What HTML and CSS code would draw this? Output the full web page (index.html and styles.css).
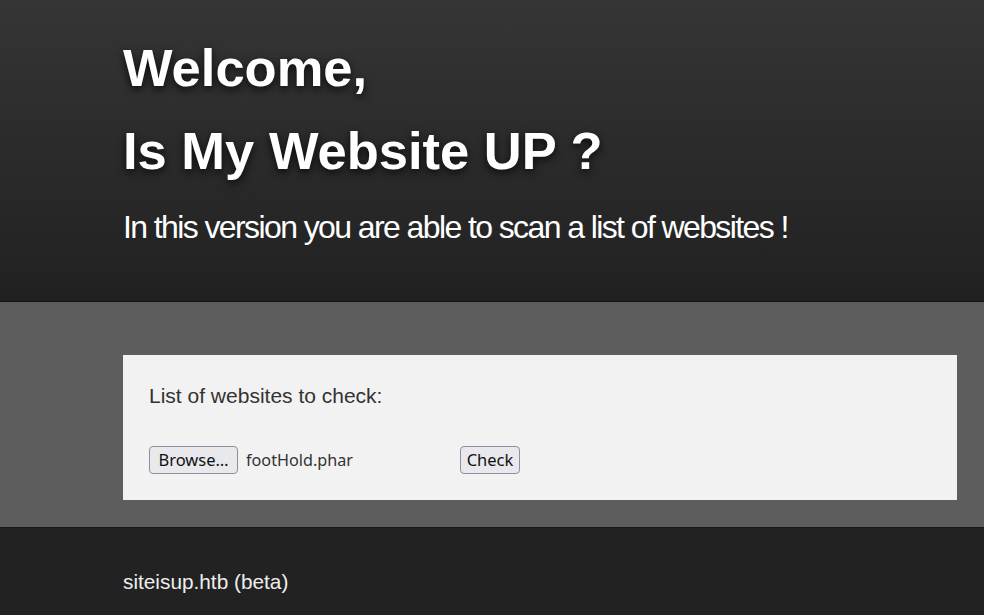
FILE: index.html
```html
<!DOCTYPE html>
<html>
<head>
<meta charset="utf-8">
<link rel="stylesheet" href="styles.css">
</head>
<body>
<header class="hero">
  <div class="wrap">
    <h1 class="title">Welcome,<br>Is My Website UP ?</h1>
    <p class="lead">In this version you are able to scan a list of websites !</p>
  </div>
</header>
<main class="band">
  <div class="wrap">
    <form class="card">
      <label class="label">List of websites to check:</label>
      <div class="row">
        <span class="file">
          <button type="button" class="btn btn-browse">Browse…</button>
          <span class="fname">footHold.phar</span>
        </span>
        <button type="button" class="btn btn-check">Check</button>
      </div>
    </form>
  </div>
</main>
<footer class="foot">
  <div class="wrap">
    <p class="copy">siteisup.htb (beta)</p>
  </div>
</footer>
</body>
</html>
```
FILE: styles.css
```css
html, body {
  margin: 0;
  padding: 0;
  background: #222222;
  font-family: "Liberation Sans", Arial, sans-serif;
}
.wrap {
  padding-left: 123px;
  padding-right: 27px;
}
.hero {
  height: 301px;
  background: linear-gradient(#353535, #212121);
  border-bottom: 1px solid #111;
  box-sizing: content-box;
}
.title {
  margin: 0;
  padding-top: 26px;
  font-size: 52.5px;
  line-height: 83px;
  font-weight: bold;
  color: #fff;
  text-shadow: 0 3px 8px rgba(0,0,0,0.8);
}
.lead {
  margin: 15px 0 0;
  font-size: 32px;
  letter-spacing: -1.6px;
  color: #fff;
  line-height: 40px;
}
.band {
  background: #5e5d5e;
  height: 226px;
  border-bottom: 1px solid #1a1a1a;
  padding-top: 53px;
  box-sizing: border-box;
}
.card {
  background: #f2f2f2;
  height: 145px;
  padding: 28px 26px 0;
  box-sizing: border-box;
}
.label {
  display: block;
  font-size: 21px;
  color: #333;
  line-height: 26px;
}
.row {
  display: flex;
  align-items: center;
  margin-top: 37px;
}
.file {
  display: flex;
  align-items: center;
  width: 311px;
}
.btn {
  font-family: "Noto Sans", "DejaVu Sans", sans-serif;
  font-size: 16.5px;
  color: #111;
  background: #e9e9ed;
  border: 1px solid #8f8f9d;
  border-radius: 4px;
  padding: 0 6px;
  height: 28px;
  line-height: 26px;
}
.btn-browse {
  width: 89px;
  padding: 0;
  text-align: center;
}
.btn-check {
  width: 60px;
  padding: 0;
  text-align: center;
}
.fname {
  margin-left: 8px;
  font-family: "Noto Sans", "DejaVu Sans", sans-serif;
  font-size: 16.2px;
  color: #333;
}
.foot {
  height: 87px;
}
.copy {
  margin: 0;
  padding-top: 42px;
  font-size: 20.8px;
  color: #eee;
}
```
